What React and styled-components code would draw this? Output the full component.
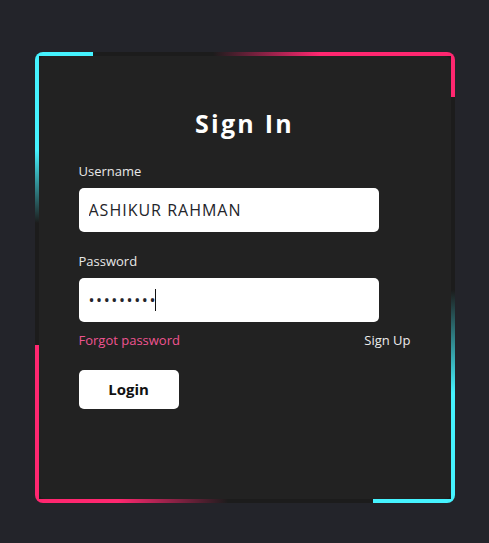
import React from "react"
import styled, { createGlobalStyle } from "styled-components"

const cyan = "#45f3ff"
const pink = "#ff2770"
const gap = "#1c1c1c"

const GlobalStyle = createGlobalStyle`
    * { box-sizing: border-box; }
    body {
        margin: 0;
        background: #23242a;
        font-family: "Open Sans", "Liberation Sans", sans-serif;
    }
`

const Page = styled.div`
    display: flex;
    justify-content: center;
    align-items: flex-start;
    min-height: 100vh;
    padding-top: 52px;
`

const Frame = styled.div`
    width: 420px;
    height: 451px;
    padding: 4px;
    border-radius: 8px;
    background:
        linear-gradient(to right, ${cyan} 0 58px, ${gap} 58px 178px, ${pink} 285px) top / 100% 4px no-repeat,
        linear-gradient(to bottom, ${cyan} 0 98px, ${gap} 171px 293px, ${pink} 293px) left / 4px 100% no-repeat,
        linear-gradient(to bottom, ${pink} 0 45px, ${gap} 45px 238px, ${cyan} 341px) right / 4px 100% no-repeat,
        linear-gradient(to right, ${pink} 0 83px, ${gap} 193px 338px, ${cyan} 338px) bottom / 100% 4px no-repeat,
        ${gap};
`

const Card = styled.form`
    height: 100%;
    background: #222222;
    border-radius: 6px;
    padding: 52px 40px 0;
    display: flex;
    flex-direction: column;
`

const Title = styled.h2`
    margin: 0 0 23px;
    font-size: 25px;
    line-height: 30px;
    font-weight: 700;
    letter-spacing: 0.09em;
    color: #fff;
    text-align: center;
`

const Field = styled.div`
    display: flex;
    flex-direction: column;
    gap: 7px;
    margin-bottom: ${p => p.last ? "8px" : "19px"};
`

const Label = styled.label`
    font-size: 13px;
    line-height: 20px;
    color: #e8e8e8;
`

const InputBox = styled.div`
    position: relative;
    width: 300px;
`

const Input = styled.input`
    width: 300px;
    height: 44px;
    border: none;
    outline: none;
    border-radius: 5px;
    padding: 0 10px;
    background: #fff;
    font-family: inherit;
    font-size: 16px;
    letter-spacing: ${p => p.type === "password" ? "1.6px" : "1px"};
    color: #23242a;
    caret-color: transparent;
`

// text cursor as it shows in the focused password field
const Caret = styled.span`
    position: absolute;
    left: 76px;
    top: 11px;
    width: 1px;
    height: 22px;
    background: #111;
`

const Links = styled.div`
    display: flex;
    justify-content: space-between;
    font-size: 13px;
    line-height: 20px;
    margin-bottom: 20px;
`

const Link = styled.a`
    color: ${p => p.accent ? "#ee5491" : "#ececec"};
    text-decoration: none;
`

const Button = styled.button`
    width: 100px;
    height: 39px;
    border: none;
    border-radius: 5px;
    background: #fff;
    font-family: inherit;
    font-size: 15px;
    line-height: 37px;
    font-weight: 700;
    color: #111;
`

const App = () => {
    return (
        <>
            <GlobalStyle />
            <Page>
                <Frame>
                    <Card onSubmit={e => e.preventDefault()}>
                        <Title>Sign In</Title>
                        <Field>
                            <Label>Username</Label>
                            <Input type="text" defaultValue="ASHIKUR RAHMAN" />
                        </Field>
                        <Field last>
                            <Label>Password</Label>
                            <InputBox>
                                <Input type="password" defaultValue="ashikur12" />
                                <Caret />
                            </InputBox>
                        </Field>
                        <Links>
                            <Link accent href="#">Forgot password</Link>
                            <Link href="#">Sign Up</Link>
                        </Links>
                        <Button type="submit">Login</Button>
                    </Card>
                </Frame>
            </Page>
        </>
    )
}

export default App
